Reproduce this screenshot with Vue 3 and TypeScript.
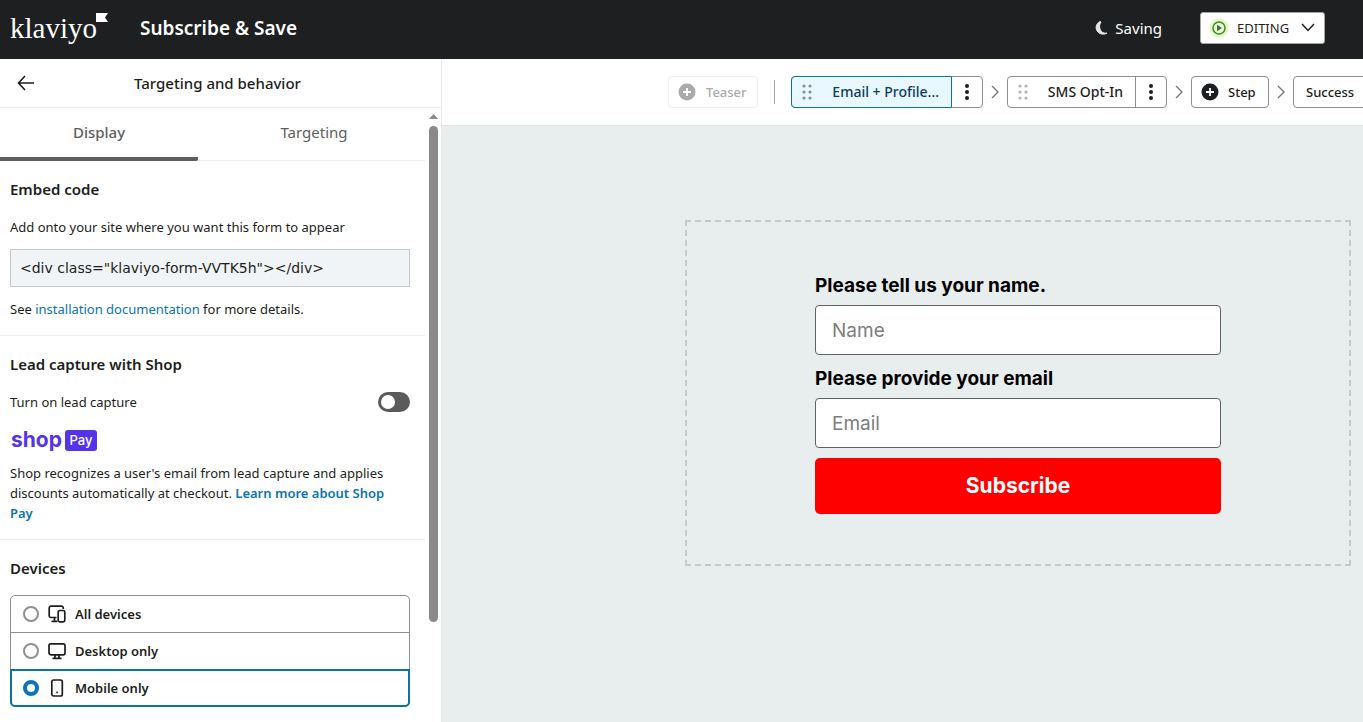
<script setup lang="ts">
import { ref } from 'vue'

type Device = 'all' | 'desktop' | 'mobile'

interface DeviceOption {
  value: Device
  label: string
}

const devices: DeviceOption[] = [
  { value: 'all', label: 'All devices' },
  { value: 'desktop', label: 'Desktop only' },
  { value: 'mobile', label: 'Mobile only' },
]

const device = ref<Device>('mobile')
const leadCapture = ref(false)
const tab = ref<'display' | 'targeting'>('display')
const embedCode = ref('<div class="klaviyo-form-VVTK5h"></div>')
const name = ref('')
const email = ref('')
</script>

<template>
  <div class="app">
    <header class="topbar">
      <a class="logo" href="#" aria-label="klaviyo">
        <span>klaviyo</span>
        <svg class="flag" width="12" height="9" viewBox="0 0 12 9"><path d="M0 0h12L9 4.5 12 9H0z" fill="#fff" /></svg>
      </a>
      <h1 class="title">Subscribe &amp; Save</h1>
      <div class="saving">
        <svg width="14" height="16" viewBox="0 0 14 16"><path d="M6 1.500C1.500 4 1 9 4 12c2.500 2.600 6 2.600 9 1.200-3 .3-5.500-.8-6.600-3.200C5.200 7.500 5.200 4.500 7 2z" fill="#e6e7e7" stroke="#e6e7e7" stroke-linejoin="round" /></svg>
        <span>Saving</span>
      </div>
      <button class="status" type="button">
        <svg class="play" width="20" height="20" viewBox="0 0 20 20">
          <circle cx="10" cy="10" r="9.5" fill="#e3f8c0" />
          <circle cx="10" cy="10" r="6" fill="#effbd9" stroke="#3c8a34" stroke-width="1.5" />
          <path d="M8 6.8 13 10l-5 3.2z" fill="#2c7d29" />
        </svg>
        <span>EDITING</span>
        <svg class="caret" width="14" height="9" viewBox="0 0 14 9"><path d="m1 1 6 6.5L13 1" fill="none" stroke="#1d1e20" stroke-width="1.5" /></svg>
      </button>
    </header>

    <div class="workspace">
      <aside class="panel">
        <div class="panel-head">
          <button class="back" type="button" aria-label="Back">
            <svg width="18" height="16" viewBox="0 0 18 16"><path d="M8 1 1.5 8 8 15M1.5 8H17" fill="none" stroke="#1d1e20" stroke-width="1.6" /></svg>
          </button>
          <h2>Targeting and behavior</h2>
        </div>

        <div class="panel-body">
          <div class="scroll">
            <div class="tabs" role="tablist">
              <button type="button" role="tab" class="tab first" :class="{ active: tab === 'display' }" @click="tab = 'display'">Display</button>
              <button type="button" role="tab" class="tab" :class="{ active: tab === 'targeting' }" @click="tab = 'targeting'">Targeting</button>
            </div>

            <section class="block">
              <h3>Embed code</h3>
              <label class="text" for="embed">Add onto your site where you want this form to appear</label>
              <input id="embed" v-model="embedCode" class="code" type="text" readonly />
              <p class="text">See <a href="#">installation documentation</a> for more details.</p>
            </section>

            <section class="block">
              <h3>Lead capture with Shop</h3>
              <div class="toggle-row">
                <label class="text" for="lead">Turn on lead capture</label>
                <input id="lead" v-model="leadCapture" class="switch" type="checkbox" role="switch" />
              </div>
              <div class="shop"><span class="shop-word">shop</span><span class="shop-pay">Pay</span></div>
              <p class="text">
                Shop recognizes a user's email from lead capture and applies discounts automatically at checkout.
                <a class="strong" href="#">Learn more about Shop Pay</a>
              </p>
            </section>

            <section class="block last">
              <h3>Devices</h3>
              <div class="options" role="radiogroup" aria-label="Devices">
                <label v-for="d in devices" :key="d.value" class="option" :class="{ selected: device === d.value }">
                  <input v-model="device" type="radio" name="device" :value="d.value" />
                  <svg width="18" height="18" viewBox="0 0 18 18" fill="none" stroke="#1d1e20" stroke-width="1.7">
                    <g v-if="d.value === 'all'">
                      <path d="M8.5 12.5H3A1.8 1.8 0 0 1 1.2 10.7V3A1.8 1.8 0 0 1 3 1.2h10.5A1.8 1.8 0 0 1 15.3 3v1M6.5 12.5v3.5M3.5 16.3h6" />
                      <rect x="10.2" y="5.5" width="6.600" height="11.3" rx="1.6" />
                    </g>
                    <g v-else-if="d.value === 'desktop'">
                      <rect x="1" y="1.8" width="16" height="11" rx="1.8" />
                      <path d="M7 13v3M11 13v3M4.5 16.3h9" />
                    </g>
                    <g v-else>
                      <rect x="3.8" y="1" width="10.5" height="16" rx="1.8" />
                      <path d="M8.2 13.3h1.6" />
                    </g>
                  </svg>
                  <span>{{ d.label }}</span>
                </label>
              </div>
            </section>
          </div>
          <div class="scrollbar" aria-hidden="true">
            <svg width="9" height="5" viewBox="0 0 9 5"><path d="M4.5 0 9 5H0z" fill="#8a8a8a" /></svg>
            <div class="thumb"></div>
          </div>
        </div>
      </aside>

      <main class="main">
        <nav class="steps" aria-label="Form steps">
          <button class="chip teaser" type="button" disabled>
            <svg width="18" height="18" viewBox="0 0 18 18"><circle cx="9" cy="9" r="8.5" fill="#a9aaab" /><path d="M9 5v8M5 9h8" stroke="#fff" stroke-width="1.8" /></svg>
            <span>Teaser</span>
          </button>
          <span class="rule"></span>
          <div class="split current">
            <button class="split-main" type="button">
              <svg width="10" height="16" viewBox="0 0 10 16" fill="#84929b"><circle v-for="n in 6" :key="n" :cx="n % 2 ? 2 : 8" :cy="2 + Math.floor((n - 1) / 2) * 6" r="1.6" /></svg>
              <span>Email + Profile...</span>
            </button>
            <button class="split-menu" type="button" aria-label="More options">
              <svg width="6" height="16" viewBox="0 0 6 16" fill="#1d1e20"><circle v-for="n in 3" :key="n" cx="3" :cy="n * 6 - 4" r="2" /></svg>
            </button>
          </div>
          <svg class="next" width="8" height="14" viewBox="0 0 8 14"><path d="m1 1 6 6-6 6" fill="none" stroke="#777" stroke-width="1.4" /></svg>
          <div class="split">
            <button class="split-main" type="button">
              <svg width="10" height="16" viewBox="0 0 10 16" fill="#b3b4b5"><circle v-for="n in 6" :key="n" :cx="n % 2 ? 2 : 8" :cy="2 + Math.floor((n - 1) / 2) * 6" r="1.6" /></svg>
              <span>SMS Opt-In</span>
            </button>
            <button class="split-menu" type="button" aria-label="More options">
              <svg width="6" height="16" viewBox="0 0 6 16" fill="#1d1e20"><circle v-for="n in 3" :key="n" cx="3" :cy="n * 6 - 4" r="2" /></svg>
            </button>
          </div>
          <svg class="next" width="8" height="14" viewBox="0 0 8 14"><path d="m1 1 6 6-6 6" fill="none" stroke="#777" stroke-width="1.4" /></svg>
          <button class="chip step" type="button">
            <svg width="18" height="18" viewBox="0 0 18 18"><circle cx="9" cy="9" r="8.5" fill="#1d1e20" /><path d="M9 5v8M5 9h8" stroke="#fff" stroke-width="1.8" /></svg>
            <span>Step</span>
          </button>
          <svg class="next" width="8" height="14" viewBox="0 0 8 14"><path d="m1 1 6 6-6 6" fill="none" stroke="#777" stroke-width="1.4" /></svg>
          <button class="chip success" type="button">Success</button>
        </nav>

        <div class="canvas">
          <div class="frame">
            <form class="form" @submit.prevent>
              <label for="name">Please tell us your name.</label>
              <input id="name" v-model="name" type="text" placeholder="Name" />
              <label for="email">Please provide your email</label>
              <input id="email" v-model="email" type="email" placeholder="Email" />
              <button type="submit">Subscribe</button>
            </form>
          </div>
        </div>
      </main>
    </div>
  </div>
</template>

<style>
body {
  margin: 0;
  overflow: hidden;
}
</style>

<style scoped>
* {
  box-sizing: border-box;
}
.app {
  display: flex;
  flex-direction: column;
  height: 100vh;
  font-family: 'Noto Sans', 'Open Sans', sans-serif;
  font-size: 13px;
  line-height: 20px;
  color: #1d1e20;
  background: #fff;
}
h1, h2, h3, p {
  margin: 0;
}
svg {
  display: block;
  flex: none;
}
button {
  font: inherit;
  color: inherit;
  margin: 0;
  padding: 0;
  border: 0;
  background: none;
}
a {
  color: #0a73b0;
  text-decoration: none;
}

.topbar {
  display: flex;
  align-items: center;
  height: 59px;
  flex: none;
  padding: 0 38px 4px 10px;
  background: #1d1f21;
  color: #fff;
}
.logo {
  display: flex;
  align-items: flex-start;
  width: 130px;
  color: #fff;
  font-family: 'Liberation Serif', serif;
  font-size: 29px;
  line-height: 30px;
}
.flag {
  margin-left: -1px;
}
.title {
  font-size: 19px;
  font-weight: 600;
  line-height: 24px;
}
.saving {
  display: flex;
  align-items: center;
  gap: 7px;
  margin-left: auto;
  font-size: 15px;
}
.status {
  display: flex;
  align-items: center;
  width: 125px;
  height: 32px;
  margin-left: 38px;
  padding: 0 9px 0 8px;
  border: 1px solid #a5a5a5;
  border-radius: 3px;
  background: #fff;
  color: #1d1e20;
}
.status span {
  margin-left: 8px;
}
.caret {
  margin-left: auto;
}

.workspace {
  display: flex;
  flex: 1;
  min-height: 0;
}
.panel {
  display: flex;
  flex-direction: column;
  width: 442px;
  flex: none;
  border-right: 1px solid #e8eaea;
}
.panel-head {
  display: grid;
  grid-template-columns: 52px 1fr 58px;
  align-items: center;
  height: 49px;
  flex: none;
  border-bottom: 1px solid #ececec;
}
.back {
  display: flex;
  justify-content: center;
}
.panel-head h2 {
  font-size: 15px;
  font-weight: 500;
  text-align: center;
}
.panel-body {
  display: flex;
  flex: 1;
  min-height: 0;
}
.scroll {
  flex: 1;
  overflow: hidden;
}
.tabs {
  display: flex;
  height: 53px;
  border-bottom: 1px solid #ececec;
}
.tab {
  flex: 1;
  height: 53px;
  padding: 0 0 2px 5px;
  border-bottom: 4px solid transparent;
  color: #5d5e60;
  font-size: 15px;
}
.tab.first {
  flex: 0 0 198px;
  padding-left: 0;
}
.tab.active {
  border-color: #5d5e60;
  border-bottom-right-radius: 2px;
  font-weight: 500;
}
.block {
  padding: 18px 15px 16px 10px;
  border-bottom: 1px solid #ececec;
}
.block h3 {
  margin-bottom: 18px;
  font-size: 15px;
  font-weight: 600;
}
.block.last {
  border-bottom: 0;
}
.block.last h3 {
  margin-bottom: 17px;
}
.block .text {
  display: block;
}
.code {
  display: block;
  width: 100%;
  height: 38px;
  margin: 12px 0;
  padding: 0 9px;
  border: 1px solid #c4cacb;
  background: #f0f4f6;
  color: inherit;
  font: 14px 'DejaVu Sans', sans-serif;
}
.toggle-row {
  display: flex;
  align-items: center;
  justify-content: space-between;
}
.switch {
  appearance: none;
  display: flex;
  align-items: center;
  width: 32px;
  height: 20px;
  margin: 0;
  padding: 3px;
  border-radius: 10px;
  background: #5a5b5c;
}
.switch::before {
  content: '';
  width: 14px;
  height: 14px;
  border-radius: 50%;
  background: #fff;
}
.switch:checked {
  justify-content: flex-end;
  background: #0a73b0;
}
.shop {
  display: flex;
  gap: 3px;
  height: 21px;
  margin: 18px 0 12px 1px;
}
.shop-word {
  color: #5433eb;
  font: 700 21px/20px Inter, sans-serif;
}
.shop-pay {
  width: 32px;
  border-radius: 3px;
  background: #5433eb;
  color: #fff;
  font: 500 13px/21px Inter, sans-serif;
  text-align: center;
}
.strong {
  font-weight: 600;
}
.options {
  border: 1px solid #8f9091;
  border-radius: 5px;
}
.option {
  display: flex;
  align-items: center;
  height: 37px;
  padding: 0 12px;
  border-bottom: 1px solid #8f9091;
  font-weight: 600;
}
.option.selected {
  height: 38px;
  margin: -1px;
  padding: 0 11px;
  border: 2px solid #0a73a5;
}
.option:last-child {
  border-radius: 0 0 5px 5px;
}
.option input {
  appearance: none;
  width: 16px;
  height: 16px;
  margin: 0 9px 0 0;
  border: 2px solid #8f9091;
  border-radius: 50%;
  background: #fff;
}
.option input:checked {
  border: 4px solid #0a73bb;
}
.option span {
  margin-left: 9px;
}
.scrollbar {
  display: flex;
  flex-direction: column;
  align-items: center;
  gap: 7px;
  width: 16px;
  padding: 6px 0 100px;
}
.thumb {
  width: 9px;
  flex: 1;
  border-radius: 5px;
  background: #8a8a8a;
}

.main {
  display: flex;
  flex-direction: column;
  flex: 1;
  min-width: 0;
  overflow: hidden;
}
.steps {
  display: flex;
  align-items: center;
  height: 67px;
  flex: none;
  padding-left: 226px;
  border-bottom: 1px solid #e2e5e5;
  font-weight: 500;
  white-space: nowrap;
}
.steps > * {
  flex: none;
}
.chip,
.split {
  display: flex;
  align-items: center;
  height: 32px;
  border: 1px solid #8f9091;
  border-radius: 4px;
}
.teaser {
  width: 90px;
  gap: 10px;
  padding-left: 9px;
  border-color: #f0f1f1;
  color: #a9aaab;
}
.rule {
  width: 1px;
  height: 24px;
  margin: 0 16px;
  background: #a9aaab;
}
.split {
  width: 160px;
}
.split.current {
  width: 192px;
}
.split-main {
  display: flex;
  align-items: center;
  flex: 1;
  height: 32px;
  padding: 0 12px 0 10px;
  font-size: 14px;
}
.split-main span {
  flex: 1;
  text-align: right;
}
.current .split-main {
  margin-left: -1px;
  border: 1px solid #0a73a5;
  border-radius: 4px 0 0 4px;
  background: #e9f8ff;
  color: #0b3d5c;
}
.split-menu {
  display: flex;
  align-items: center;
  justify-content: center;
  width: 31px;
  height: 30px;
  border-left: 1px solid #8f9091;
}
.current .split-menu {
  width: 30px;
  border-left: 0;
}
.next {
  margin: 0 8px;
}
.step {
  width: 78px;
  gap: 9px;
  padding-left: 9px;
}
.success {
  padding: 0 12px;
}

.canvas {
  flex: 1;
  padding: 94px 12px 0 243px;
  background: #e8eeee;
}
.frame {
  padding: 50px 20px;
  border: 2px dashed #c5caca;
}
.form {
  display: flex;
  flex-direction: column;
  max-width: 406px;
  margin: 0 auto;
  color: #000;
  font-family: Inter, sans-serif;
  font-size: 19px;
}
.form label {
  margin-bottom: 6px;
  line-height: 27px;
  font-weight: 700;
}
.form input {
  width: 100%;
  height: 50px;
  margin: 0 0 10px;
  padding: 0 16px;
  border: 1px solid #5d6264;
  border-radius: 4px;
  background: #fff;
  font: inherit;
}
.form input::placeholder {
  color: #7d7d7d;
}
.form button {
  height: 56px;
  border-radius: 5px;
  background: #f00;
  color: #fff;
  font-size: 21px;
  font-weight: 700;
}
</style>
